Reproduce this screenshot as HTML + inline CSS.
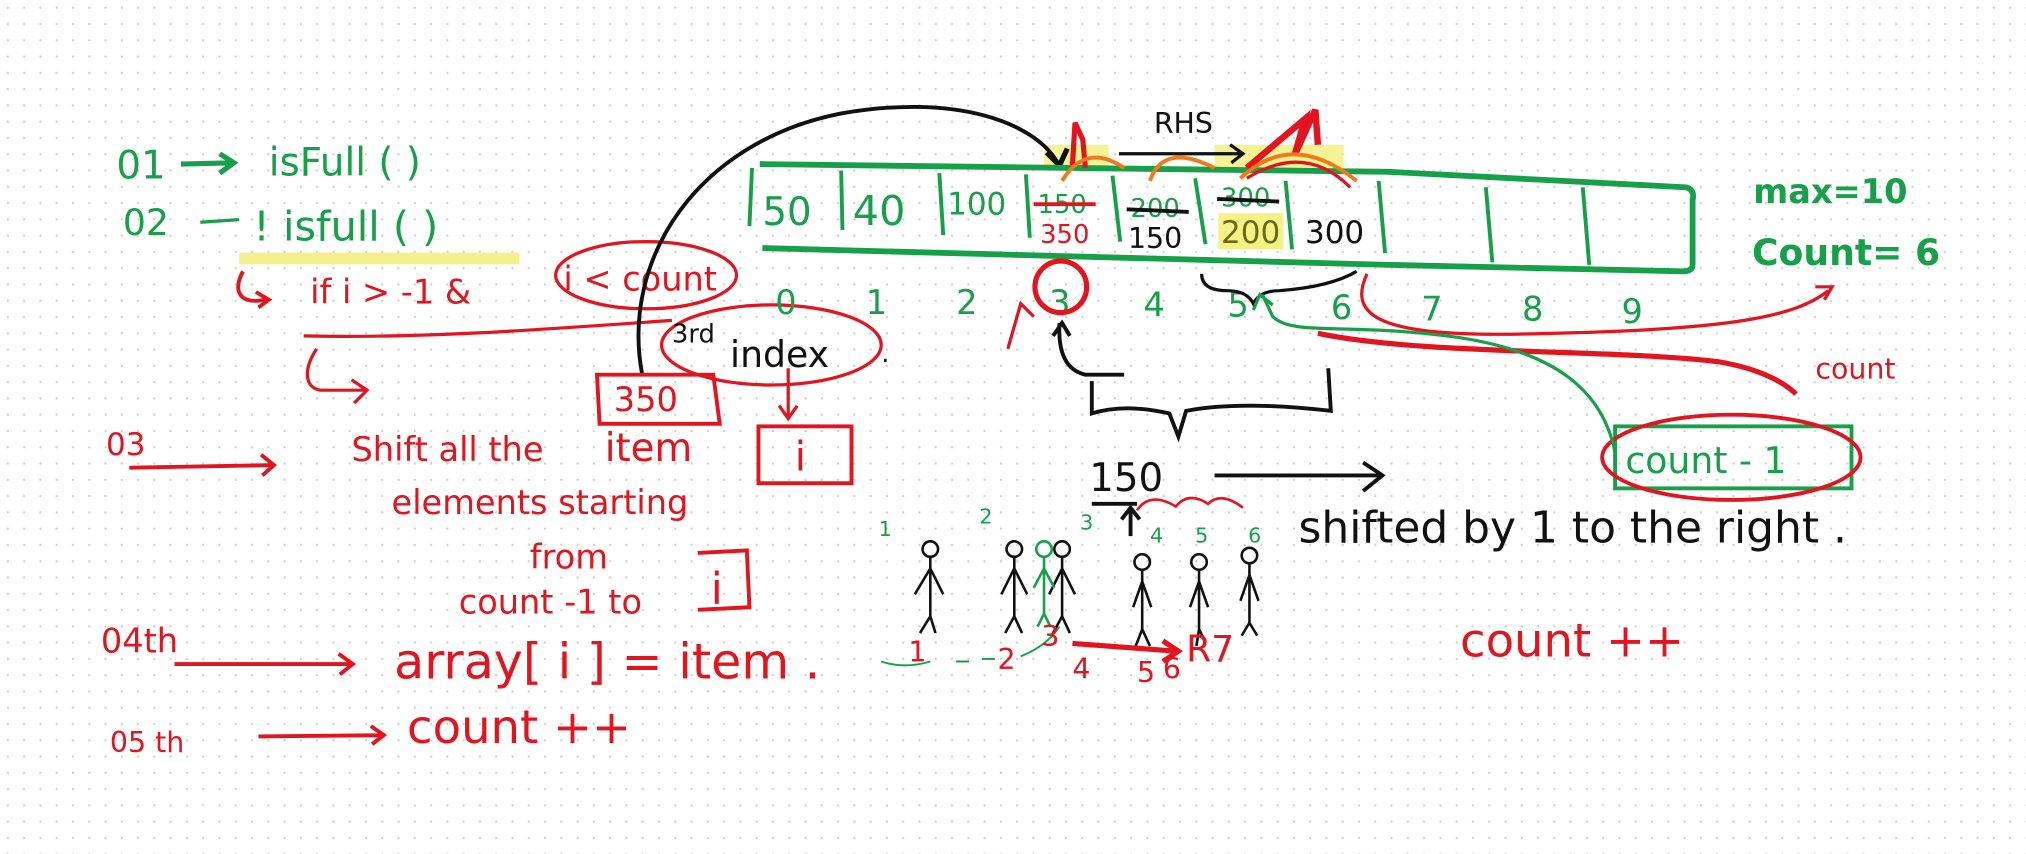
<!DOCTYPE html>
<html><head><meta charset="utf-8">
<style>
html,body{margin:0;padding:0;background:#fff;}
svg{display:block}
text{font-family:"DejaVu Sans","Liberation Sans",sans-serif;}
.g{fill:#16a04a}.r{fill:#e3141e}.k{fill:#111}
</style></head><body>
<svg width="2026" height="854" viewBox="0 0 1568 661" xmlns="http://www.w3.org/2000/svg">
<defs>
<pattern id="d" width="12.6" height="12.6" patternUnits="userSpaceOnUse">
<circle cx="6" cy="6" r="0.9" fill="#cfcfcf"/></pattern>
</defs>
<rect width="1568" height="661" fill="#fff"/>
<rect width="1568" height="661" fill="url(#d)"/>

<line x1="185" y1="200" x2="402" y2="200" stroke="#f6f08a" stroke-width="9"/>
<rect x="808" y="112" width="50" height="18" fill="#f3f07a" opacity=".8"/>
<rect x="940" y="112" width="100" height="20" fill="#f3f07a" opacity=".8"/>
<rect x="943" y="165" width="50" height="28" fill="#f3f07a" opacity=".9"/>

<text x="90" y="138" class="g" font-size="30">01</text>
<path d="M140 127 L180 126 M170 119 L181 126 L170 134" stroke="#16a04a" stroke-width="4" fill="none"/>
<text x="208" y="136" class="g" font-size="30">isFull ( )</text>
<text x="95" y="182" class="g" font-size="28">02</text>
<path d="M155 172 L185 170" stroke="#16a04a" stroke-width="2.5" fill="none"/>
<text x="196" y="186" class="g" font-size="32">! isfull ( )</text>

<path d="M188 210 C180 225 185 236 205 232 M198 226 L208 232 L200 238" stroke="#e3141e" stroke-width="3" fill="none"/>
<text x="240" y="235" class="r" font-size="26">if  i &gt; -1  &amp;</text>
<ellipse cx="500" cy="213" rx="70" ry="26" fill="none" stroke="#e3141e" stroke-width="2.5"/>
<text x="436" y="225" class="r" font-size="26">i &lt; count</text>
<path d="M235 260 C330 262 420 255 520 248" stroke="#e3141e" stroke-width="2.5" fill="none"/>
<path d="M245 270 C235 285 235 300 248 302 L282 302 M272 294 L284 302 L274 312" stroke="#e3141e" stroke-width="2.5" fill="none"/>
<ellipse cx="597" cy="267" rx="85" ry="31" fill="none" stroke="#e3141e" stroke-width="2.5"/>
<text x="520" y="265" class="k" font-size="20">3rd</text>
<text x="565" y="284" class="k" font-size="28">index</text>
<text x="682" y="280" class="k" font-size="20">.</text>

<path d="M497 290 C480 200 540 110 650 88 C740 72 800 95 818 125" stroke="#111" stroke-width="3" fill="none"/>
<path d="M810 118 L820 128 L826 115" stroke="#111" stroke-width="4" fill="none"/>

<path d="M462 290 L552 290 L557 328 L464 328 Z" fill="none" stroke="#e3141e" stroke-width="3"/>
<text x="475" y="318" class="r" font-size="26">350</text>
<text x="468" y="357" class="r" font-size="30">item</text>
<path d="M610 285 L610 322 M603 314 L610 324 L617 314" stroke="#e3141e" stroke-width="2.5" fill="none"/>
<rect x="587" y="330" width="72" height="44" fill="none" stroke="#e3141e" stroke-width="3"/>
<text x="615" y="364" class="r" font-size="32">i</text>

<text x="82" y="352" class="r" font-size="24">03</text>
<path d="M100 362 L210 360 M202 352 L212 360 L203 368" stroke="#e3141e" stroke-width="3" fill="none"/>
<text x="272" y="357" class="r" font-size="26">Shift all the</text>
<text x="303" y="398" class="r" font-size="26">elements  starting</text>
<text x="410" y="440" class="r" font-size="26">from</text>
<text x="355" y="475" class="r" font-size="26">count -1  to</text>
<path d="M540 428 L578 426 L580 470 L540 472" fill="none" stroke="#e3141e" stroke-width="3"/>
<text x="550" y="467" class="r" font-size="34">i</text>
<text x="78" y="505" class="r" font-size="26">04th</text>
<path d="M135 514 L272 514 M262 506 L273 514 L263 522" stroke="#e3141e" stroke-width="3" fill="none"/>
<text x="305" y="525" class="r" font-size="38">array[ i ] = item .</text>
<text x="85" y="582" class="r" font-size="22">05 th</text>
<path d="M200 570 L295 569 M287 562 L297 569 L288 576" stroke="#e3141e" stroke-width="3" fill="none"/>
<text x="315" y="575" class="r" font-size="36">count ++</text>

<path d="M588 127 L1075 133 L1305 145 Q1312 147 1310 155 L1310 205 Q1310 210 1302 210 L1075 205 L590 192" stroke="#16a04a" stroke-width="4.5" fill="none"/>
<g stroke="#16a04a" stroke-width="3">
<line x1="582" y1="130" x2="580" y2="175"/>
<line x1="651" y1="132" x2="652" y2="178"/>
<line x1="727" y1="134" x2="730" y2="182"/>
<line x1="794" y1="135" x2="797" y2="184"/>
<line x1="861" y1="136" x2="867" y2="187"/>
<line x1="925" y1="138" x2="933" y2="189"/>
<line x1="995" y1="140" x2="1000" y2="193"/>
<line x1="1067" y1="140" x2="1072" y2="196"/>
<line x1="1150" y1="145" x2="1155" y2="203"/>
<line x1="1225" y1="145" x2="1230" y2="205"/>
</g>
<text x="590" y="174" class="g" font-size="30">50</text>
<text x="660" y="174" class="g" font-size="32">40</text>
<text x="733" y="166" class="g" font-size="24">100</text>
<text x="803" y="165" class="g" font-size="20">150</text>
<line x1="800" y1="158" x2="848" y2="158" stroke="#e3141e" stroke-width="3"/>
<text x="805" y="188" class="r" font-size="20">350</text>
<text x="875" y="168" class="g" font-size="20">200</text>
<line x1="872" y1="162" x2="920" y2="164" stroke="#111" stroke-width="3"/>
<text x="873" y="192" class="k" font-size="22">150</text>
<text x="945" y="160" class="g" font-size="20">300</text>
<line x1="942" y1="154" x2="990" y2="156" stroke="#111" stroke-width="3"/>
<text x="945" y="188" fill="#6a6a10" font-size="24">200</text>
<text x="1010" y="188" class="k" font-size="24">300</text>

<g class="g" font-size="26">
<text x="600" y="243">0</text><text x="670" y="243">1</text><text x="740" y="243">2</text>
<text x="812" y="243">3</text><text x="885" y="245">4</text><text x="950" y="245">5</text>
<text x="1030" y="247">6</text><text x="1100" y="248">7</text><text x="1178" y="248">8</text><text x="1255" y="250">9</text>
</g>
<circle cx="821" cy="222" r="20" fill="none" stroke="#e3141e" stroke-width="4"/>
<path d="M930 212 Q930 225 950 225 Q965 225 970 235 Q975 225 990 225 Q1030 222 1050 210" stroke="#111" stroke-width="2.5" fill="none"/>

<text x="893" y="103" class="k" font-size="22">RHS</text>
<path d="M866 119 L960 119 M952 112 L962 119 L953 126" stroke="#111" stroke-width="2.5" fill="none"/>
<path d="M830 128 L832 95 L838 108 L840 130" stroke="#e3141e" stroke-width="4" fill="none"/>
<path d="M965 130 L1010 92 L1002 120 L1018 85 L1020 112" stroke="#e3141e" stroke-width="5" fill="none"/>
<path d="M822 140 Q840 110 870 130 M890 140 Q900 110 940 130 M960 138 Q1000 100 1050 140" stroke="#f07a1a" stroke-width="3" fill="none"/>
<path d="M965 138 Q1010 110 1045 145" stroke="#e3141e" stroke-width="2.5" fill="none"/>

<text x="1357" y="157" class="g" font-size="26" font-weight="bold">max=10</text>
<text x="1356" y="205" class="g" font-size="28" font-weight="bold">Count= 6</text>
<path d="M1058 212 C1040 250 1080 262 1200 258 C1340 255 1390 245 1415 225" stroke="#e3141e" stroke-width="2.5" fill="none"/>
<path d="M1405 222 L1418 222 L1412 232" stroke="#e3141e" stroke-width="2.5" fill="none"/>
<path d="M1020 258 C1100 275 1250 270 1330 280 C1360 285 1380 295 1390 305" stroke="#e3141e" stroke-width="4" fill="none"/>
<text x="1405" y="293" class="r" font-size="22">count</text>
<rect x="1250" y="330" width="183" height="48" fill="none" stroke="#16a04a" stroke-width="3"/>
<ellipse cx="1340" cy="354" rx="100" ry="33" fill="none" stroke="#e3141e" stroke-width="3"/>
<text x="1258" y="366" class="g" font-size="28">count - 1</text>
<path d="M1250 350 C1240 300 1200 270 1120 260 C1040 250 1000 260 985 245 L977 228 M970 240 L975 228 L985 236" stroke="#16a04a" stroke-width="2.5" fill="none"/>

<path d="M820 250 Q818 285 840 290 L870 290" stroke="#111" stroke-width="3" fill="none"/>
<path d="M815 260 L822 250 L828 260" stroke="#111" stroke-width="3" fill="none"/>
<path d="M780 270 L790 235 L800 245" stroke="#e3141e" stroke-width="2.5" fill="none"/>
<path d="M845 295 L845 320 Q870 312 905 320 L912 338 L918 318 Q960 310 1030 318 L1028 285" stroke="#111" stroke-width="3" fill="none"/>
<text x="843" y="380" class="k" font-size="30">150</text>
<line x1="845" y1="390" x2="880" y2="390" stroke="#111" stroke-width="3"/>
<path d="M875 395 L875 415 M868 402 L875 393 L882 402" stroke="#111" stroke-width="3" fill="none"/>
<path d="M940 368 L1068 368 M1055 358 L1070 368 L1055 380" stroke="#111" stroke-width="3" fill="none"/>
<text x="1005" y="420" class="k" font-size="34">shifted by 1  to the right .</text>
<path d="M880 395 Q890 380 910 392 Q920 380 935 390 Q945 380 962 393" stroke="#e3141e" stroke-width="2" fill="none"/>

<g class="g" font-size="16"><text x="680" y="415">1</text><text x="758" y="405">2</text><text x="836" y="410">3</text><text x="890" y="420">4</text><text x="925" y="420">5</text><text x="966" y="420">6</text></g>
<g stroke="#111" stroke-width="2" fill="none">
<g transform="translate(720,425)"><circle cx="0" cy="0" r="6"/><path d="M0 6 L0 52 M0 15 L-12 35 M0 15 L10 35 M0 52 L-8 65 M0 52 L4 65"/></g>
<g transform="translate(785,425)"><circle cx="0" cy="0" r="6"/><path d="M0 6 L0 52 M0 15 L-10 35 M0 15 L10 35 M0 52 L-7 65 M0 52 L6 65"/></g>
<g transform="translate(822,425)"><circle cx="0" cy="0" r="6"/><path d="M0 6 L0 52 M0 15 L-10 35 M0 15 L10 35 M0 52 L-7 65 M0 52 L6 65"/></g>
<g transform="translate(884,435)"><circle cx="0" cy="0" r="6"/><path d="M0 6 L0 52 M0 15 L-7 35 M0 15 L7 35 M0 52 L-5 65 M0 52 L6 65"/></g>
<g transform="translate(928,435)"><circle cx="0" cy="0" r="6"/><path d="M0 6 L0 52 M0 15 L-7 35 M0 15 L7 35 M0 52 L-2 65 M0 52 L4 60"/></g>
<g transform="translate(967,430)"><circle cx="0" cy="0" r="6"/><path d="M0 6 L0 52 M0 15 L-7 35 M0 15 L7 35 M0 52 L-6 62 M0 52 L6 62"/></g>
</g>
<g transform="translate(808,425)" stroke="#16a04a" stroke-width="2" fill="none"><circle cx="0" cy="0" r="6"/><path d="M0 6 L0 50 M0 15 L-8 30 M0 15 L8 30 M0 50 L-5 60 M0 50 L5 60"/></g>
<path d="M682 512 Q700 518 720 512 M740 512 L750 512 M760 510 L770 510 M790 508 Q810 500 820 485" stroke="#16a04a" stroke-width="1.5" fill="none"/>
<g class="r" font-size="22"><text x="703" y="512">1</text><text x="772" y="518">2</text><text x="806" y="500">3</text><text x="830" y="525">4</text><text x="880" y="528">5</text><text x="900" y="525">6</text></g>
<path d="M830 498 L910 504 M900 496 L912 504 L900 512" stroke="#e3141e" stroke-width="4" fill="none"/>
<text x="918" y="512" class="r" font-size="28">R7</text>
<text x="1130" y="508" class="r" font-size="36">count ++</text>
</svg>
</body></html>
